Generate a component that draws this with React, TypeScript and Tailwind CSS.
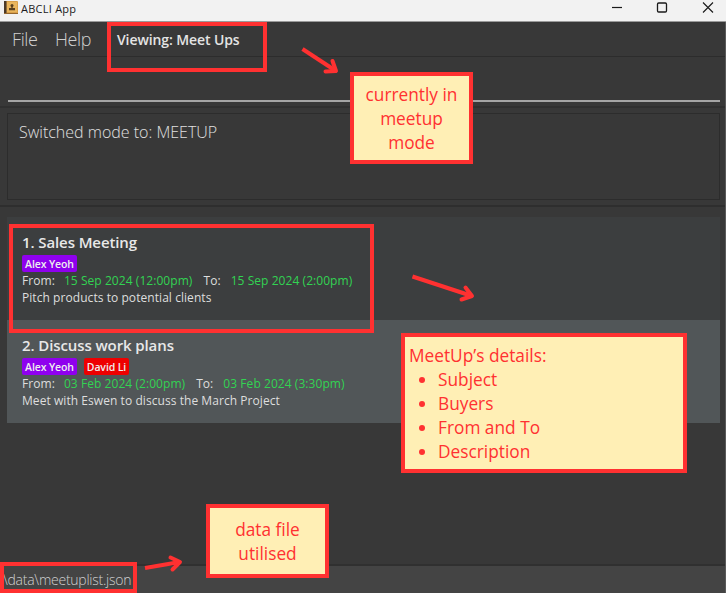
import type { ReactNode } from "react";

type Tag = { name: string; tone: string };
type MeetUp = {
  title: string;
  tags: Tag[];
  from: string;
  to: string;
  description: string;
};

const meetUps: MeetUp[] = [
  {
    title: "1. Sales Meeting",
    tags: [{ name: "Alex Yeoh", tone: "bg-[#8f00ee] w-[55px]" }],
    from: "15 Sep 2024 (12:00pm)",
    to: "15 Sep 2024 (2:00pm)",
    description: "Pitch products to potential clients",
  },
  {
    title: "2. Discuss work plans",
    tags: [
      { name: "Alex Yeoh", tone: "bg-[#8f00ee] w-[55px]" },
      { name: "David Li", tone: "bg-[#ee0000] w-[45px]" },
    ],
    from: "03 Feb 2024 (2:00pm)",
    to: "03 Feb 2024 (3:30pm)",
    description: "Meet with Eswen to discuss the March Project",
  },
];

function TitleBar() {
  return (
    <header className="flex h-[22px] shrink-0 items-start border-b border-[#9a9a9a] bg-[#f2f2f2] pl-1">
      <svg className="mt-px h-[13px] w-[14px]" viewBox="0 0 14 13">
        <rect width="14" height="13" rx="1" fill="#d9a04a" />
        <rect x="3" y="1" width="10" height="10" fill="#e9b55c" />
        <rect width="2.5" height="13" fill="#4b3928" />
        <rect y="12" width="14" height="1" fill="#94672f" />
        <circle cx="8" cy="4.5" r="1.5" fill="#59401f" />
        <path d="M7.3 5h1.4v2H11v2.2H5V7h2.3z" fill="#59401f" />
      </svg>
      <span className="ml-[3px] text-[11px] leading-[17px] tracking-[0.25px] text-[#1c1c1c]">ABCLI App</span>
      <svg className="ml-auto h-4 w-[116px]" viewBox="0 0 116 16" fill="none" stroke="#1a1a1a">
        <path d="M2 7.5h10" strokeWidth="1.2" />
        <rect x="47.5" y="3" width="9" height="9" rx="1.2" strokeWidth="1.3" />
        <path d="M93 2.5l10 10M103 2.5l-10 10" strokeWidth="1.1" />
      </svg>
    </header>
  );
}

function Card({ meetUp, tone }: { meetUp: MeetUp; tone: string }) {
  return (
    <li className={`h-[103px] pl-[15px] pt-[14px] text-[12px] leading-[17px] tracking-[0.06px] text-[#dedede] ${tone}`}>
      <h2 className="h-[24px] text-[15px] font-semibold leading-[23px] tracking-[-0.1px] text-[#e8e8e8]">
        {meetUp.title}
      </h2>
      <div className="flex h-[18px] gap-[7px]">
        {meetUp.tags.map((tag) => (
          <span
            key={tag.name}
            className={`h-[17px] rounded-[2px] text-center text-[10.5px] font-semibold leading-[18px] tracking-[-0.1px] text-[#eee] ${tag.tone}`}
          >
            {tag.name}
          </span>
        ))}
      </div>
      <p className="-mt-px flex whitespace-nowrap">
        <span>From:</span>
        <span className="ml-[9px] text-[#32d352]">{meetUp.from}</span>
        <span className="ml-[11px]">To:</span>
        <span className="ml-[10px] text-[#32d352]">{meetUp.to}</span>
      </p>
      <p className="whitespace-nowrap">{meetUp.description}</p>
    </li>
  );
}

function Note({ place, children }: { place: string; children: ReactNode }) {
  return (
    <div className={`absolute border-4 border-[#ff3131] bg-[#ffefb5] text-[17.3px] leading-[24px] text-[#ff3131] ${place}`}>
      {children}
    </div>
  );
}

function Arrows() {
  return (
    <svg
      className="pointer-events-none absolute inset-0"
      width="726"
      height="593"
      fill="none"
      stroke="#ff3131"
      strokeWidth="4"
      strokeLinejoin="round"
    >
      <path d="M302.500 49L336 71" />
      <path d="M332.500 61L336 71L325.500 71.500" strokeLinecap="round" />
      <path d="M412.500 276.500L472 296" />
      <path d="M465.500 287.500L472 296L461.500 299.500" strokeLinecap="round" />
      <path d="M145 568L180 562" />
      <path d="M170.500 557.500L180 562L172.500 569.500" strokeLinecap="round" />
    </svg>
  );
}

export default function App() {
  return (
    <div className="relative flex h-[593px] w-[726px] flex-col overflow-hidden bg-[#383838] font-['Open_Sans','Noto_Sans',sans-serif]">
      <TitleBar />
      <div className="flex min-h-0 flex-1 flex-col border-r border-[#5a5a5a]">
        <nav className="flex h-[35px] shrink-0 border-b border-[#2c2c2c] pl-3 text-[18px] font-light leading-[35px] text-[#d0d0d0]">
          <span className="w-[43px] tracking-[-0.4px]">File</span>
          <span className="w-[62px] tracking-[-0.4px]">Help</span>
          <span className="text-[14px] font-semibold leading-[35px] tracking-[-0.1px] text-[#e4e4e4]">Viewing: Meet Ups</span>
        </nav>
        <div className="flex h-[51px] shrink-0 flex-col border-b-2 border-[#303030] pl-2 pr-[5px]">
          <div className="mt-[43px] h-[2px] bg-[#a5a5a5]" />
        </div>
        <section className="h-[99px] shrink-0 border-b-2 border-[#2e2e2e] pl-[7px] pr-[5px] pt-[5px]">
          <div className="h-[87px] border border-[#2c2c2c] pl-[11px] pt-[6px] text-[16px] font-light leading-[24px] text-[#e0e0e0]">
            Switched mode to: MEETUP
          </div>
        </section>
        <ul className="mt-[10px] flex-1 pl-[7px] pr-[5px]">
          {meetUps.map((meetUp, i) => (
            <Card key={meetUp.title} meetUp={meetUp} tone={i % 2 === 0 ? "bg-[#3c3e3f]" : "bg-[#515658]"} />
          ))}
        </ul>
        <footer className="h-[29px] shrink-0 whitespace-nowrap border-t-2 border-[#303030] bg-[#444] pl-[3px] text-[14px] font-light leading-[28px] tracking-[-0.25px] text-[#d0d0d0]">
          \data\meetuplist.json
        </footer>
      </div>

      <div className="absolute left-[107px] top-[22px] h-[50px] w-[160px] border-4 border-[#ff3131]" />
      <div className="absolute left-[9px] top-[224px] h-[109px] w-[365px] border-4 border-[#ff3131]" />
      <div className="absolute left-0 top-[562px] h-[31px] w-[137px] border-4 border-[#ff3131]" />

      <Note place="left-[350px] top-[72px] h-[92px] w-[123px] px-2 pt-[7px] text-center">
        currently in
        <br />
        meetup
        <br />
        mode
      </Note>
      <Note place="left-[401px] top-[333px] h-[140px] w-[286px] pl-1 pt-[7px]">
        <p>MeetUp’s details:</p>
        <ul>
          {["Subject", "Buyers", "From and To", "Description"].map((item) => (
            <li key={item} className="flex items-center pl-[10px]">
              <span className="mr-[13px] h-[6px] w-[6px] rounded-full bg-[#ff3131]" />
              {item}
            </li>
          ))}
        </ul>
      </Note>
      <Note place="left-[206px] top-[504px] h-[74px] w-[123px] pt-[10px] text-center">
        data file
        <br />
        utilised
      </Note>
      <Arrows />
    </div>
  );
}
